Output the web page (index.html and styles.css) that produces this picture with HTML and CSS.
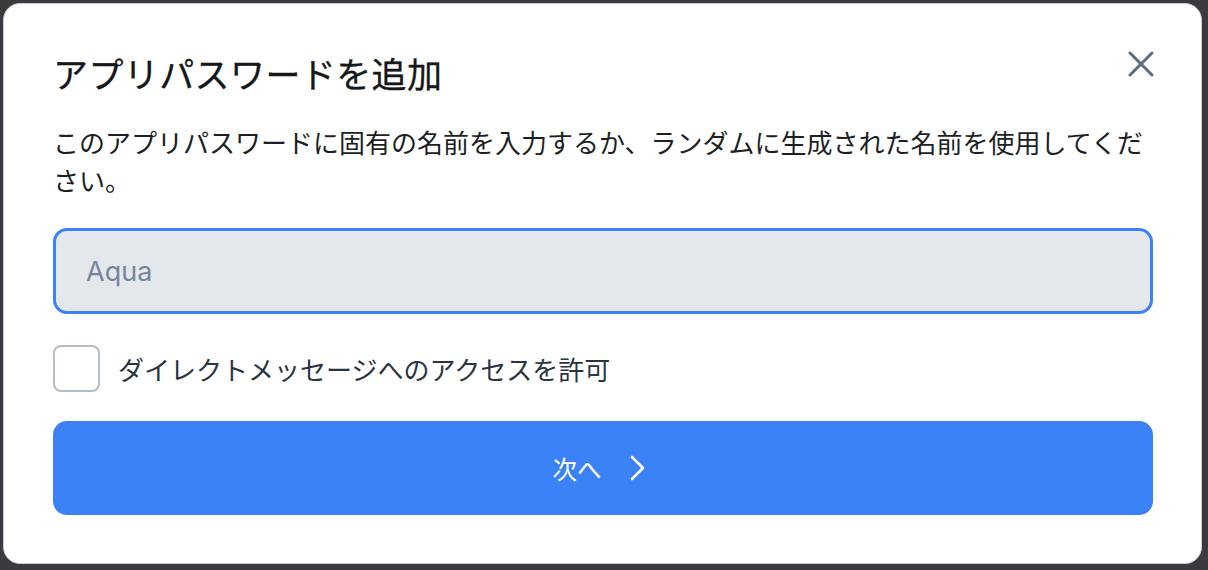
FILE: index.html
```html
<!DOCTYPE html>
<html lang="ja">
<head>
<meta charset="utf-8">
<title>アプリパスワードを追加</title>
<link rel="stylesheet" href="styles.css">
</head>
<body>
<div class="modal">
  <div class="header">
    <h1 class="title">アプリパスワードを追加</h1>
    <button class="close" aria-label="閉じる">
      <svg width="40" height="40" viewBox="0 0 40 40"><path d="M9 9 L31 31 M31 9 L9 31" stroke="#5b6b80" stroke-width="3" stroke-linecap="round" fill="none"/></svg>
    </button>
  </div>
  <p class="desc">このアプリパスワードに固有の名前を入力するか、ランダムに生成された名前を使用してください。</p>
  <input class="field" type="text" placeholder="Aqua">
  <label class="check-row">
    <span class="box"></span>
    <span class="check-label">ダイレクトメッセージへのアクセスを許可</span>
  </label>
  <button class="next">
    <span>次へ</span>
    <svg width="20" height="26" viewBox="0 0 20 26"><path d="M4 2 L15 13 L4 24" stroke="#ffffff" stroke-width="2.6" stroke-linecap="round" stroke-linejoin="round" fill="none"/></svg>
  </button>
</div>
</body>
</html>
```
FILE: styles.css
```css
html, body {
  margin: 0;
  padding: 0;
  height: 100%;
}
body {
  background: #3a3b3f;
  padding: 3px 6px 6px 3px;
  box-sizing: border-box;
  font-family: "Noto Sans CJK JP", "Noto Sans", sans-serif;
}
.modal {
  box-sizing: border-box;
  height: 561px;
  background: #ffffff;
  border: 1px solid #c6ccd5;
  border-radius: 17px;
  padding: 48px 48px 48px 49px;
  display: flex;
  flex-direction: column;
}
.header {
  display: flex;
  justify-content: space-between;
  align-items: flex-start;
}
.title {
  margin: 0;
  font-size: 35px;
  line-height: 42px;
  font-weight: 400;
  color: #15171a;
  letter-spacing: 0.4px;
  -webkit-text-stroke: 0.3px #15171a;
}
.close {
  background: none;
  border: 0;
  padding: 0;
  margin: -8px -8px 0 0;
  width: 40px;
  height: 40px;
  cursor: pointer;
  display: flex;
}
.desc {
  margin: 29px 0 0 0;
  font-size: 26px;
  line-height: 38px;
  color: #1c1f24;
}
.field {
  margin-top: 29px;
  box-sizing: border-box;
  height: 86px;
  width: 100%;
  border: 3px solid #3b82f6;
  border-radius: 14px;
  background: #e4e7ec;
  padding: 0 30px;
  font-family: "Inter", "Noto Sans", sans-serif;
  font-size: 27px;
  color: #1c1f24;
  outline: none;
}
.field::placeholder {
  color: #76859a;
}
.check-row {
  margin-top: 31px;
  display: flex;
  align-items: center;
  gap: 18px;
  height: 47px;
}
.box {
  box-sizing: border-box;
  width: 47px;
  height: 47px;
  border: 2px solid #b3bdca;
  border-radius: 8px;
  background: #fff;
}
.check-label {
  font-size: 26px;
  color: #2a3442;
}
.next {
  margin-top: 29px;
  height: 94px;
  width: 100%;
  border: 0;
  border-radius: 14px;
  background: #3b82f6;
  color: #fff;
  font-family: "Noto Sans CJK JP", sans-serif;
  font-size: 24.5px;
  display: flex;
  align-items: center;
  justify-content: center;
  gap: 26px;
  padding: 0 6px 0 0;
}
```
